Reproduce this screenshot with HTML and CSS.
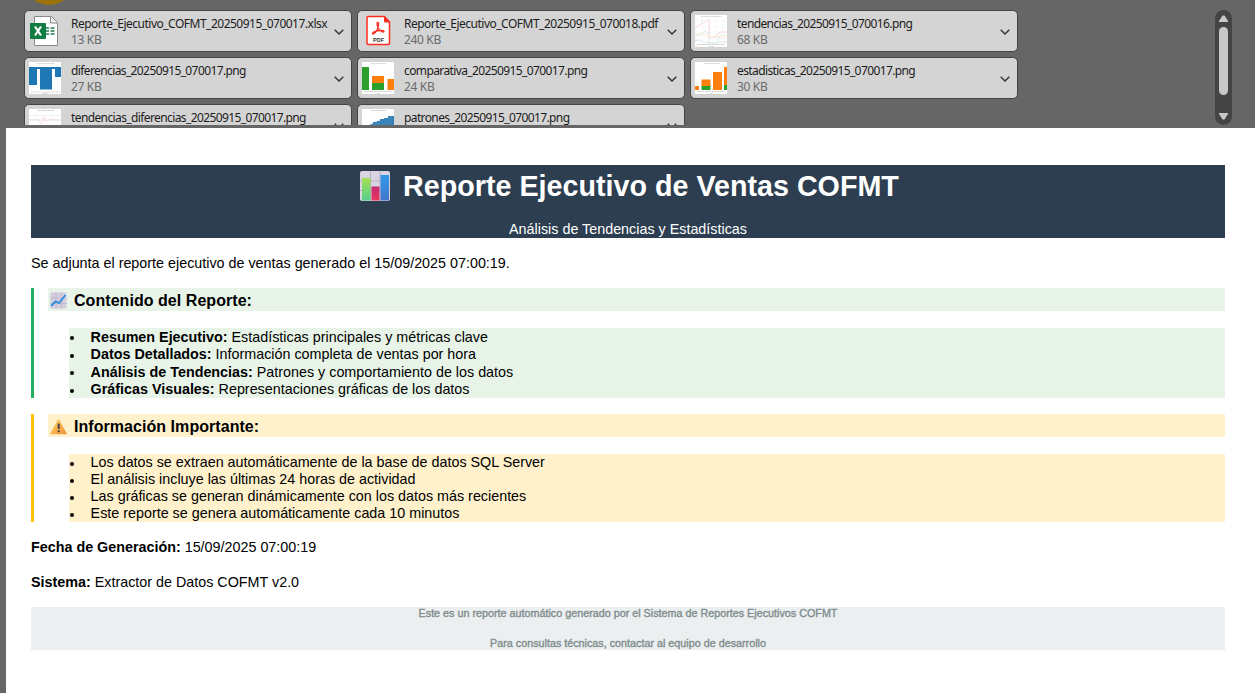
FILE: index.html
```html
<!DOCTYPE html>
<html lang="es">
<head>
<meta charset="utf-8">
<title>Reporte Ejecutivo de Ventas COFMT</title>
<link rel="stylesheet" href="styles.css">
</head>
<body>
<header class="attachments">
  <div class="avatar"></div>
  <div class="files">
    <div class="file">
      <svg class="thumb" viewBox="0 0 32 32"><path d="M5.500 1.500h17l6 6v23h-23z" fill="#fff" stroke="#8a8a8a"/><path d="M21.500 1.500v6.500h7" fill="#eee" stroke="#8a8a8a"/><path d="M17 13h3m1.500 0h4M17 16h3m1.500 0h4M17 19h3m1.500 0h4" stroke="#21804f" stroke-width="1.600"/><rect x="1" y="8" width="16" height="16" rx="1" fill="#107c41"/><path d="M6 11.500l6 9M12 11.500l-6 9" stroke="#fff" stroke-width="2.200"/></svg>
      <div class="info"><span class="name long">Reporte_Ejecutivo_COFMT_20250915_070017.xlsx</span><span class="size">13 KB</span></div>
      <svg class="chevron" viewBox="0 0 10 6"><path d="M.7 .7L5 5 9.300 .7"/></svg>
    </div>
    <div class="file">
      <svg class="thumb" viewBox="0 0 32 32"><path d="M6.500 1.500h16l5 5.500v21q0 1.500-1.500 1.500h-19.500q-1.500 0-1.500-1.500v-25q0-1.500 1.500-1.500z" fill="#fff" stroke="#fa2c20" stroke-width="1.500"/><path d="M22 1l6 6.500h-4.500q-1.500 0-1.500-1.500z" fill="#fa2c20"/><path d="M15.500 7.500c2-.5 1 5-1 8.500-1.500 2.500-4 4-4 2.500s4-2.500 7-3c3-.4 5 .3 4.500 1.200-1 1.300-4.500-1.200-6-4-1-2.500-1.500-5-.5-5.200z" fill="none" stroke="#fa2c20" stroke-width="1.300"/><text class="pdf-label" x="16.500" y="26.500">PDF</text></svg>
      <div class="info"><span class="name long">Reporte_Ejecutivo_COFMT_20250915_070018.pdf</span><span class="size">240 KB</span></div>
      <svg class="chevron" viewBox="0 0 10 6"><path d="M.7 .7L5 5 9.300 .7"/></svg>
    </div>
    <div class="file">
      <svg class="thumb" viewBox="0 0 32 32"><path d="M0 0h32v32H0z" fill="#fff"/><path d="M0 6h32M0 12h32M0 18h32M0 24h32M7 3v26M14 3v26M21 3v26M28 3v26" stroke="#f7f7f7"/><path d="M6 1.500h21M2 29.500h28M14 31.500h5" stroke="#d4d4d4" stroke-dasharray="2 .5"/><g fill="none"><path d="M0 13l4-3 4-2 6-4 .5 18h6l4-5h7.500" stroke="#fadada"/><path d="M0 21l5-1 5-4 4 3v9h9l2-8h7" stroke="#dff0df"/><path d="M0 20l7-1 7 3h18" stroke="#fcebda"/><path d="M0 26l5-1 5 3h13l3-1h6" stroke="#dcebf5"/></g></svg>
      <div class="info"><span class="name">tendencias_20250915_070016.png</span><span class="size">68 KB</span></div>
      <svg class="chevron" viewBox="0 0 10 6"><path d="M.7 .7L5 5 9.300 .7"/></svg>
    </div>
    <div class="file">
      <svg class="thumb" viewBox="0 0 32 32"><path d="M0 0h32v32H0z" fill="#fff"/><path d="M8 1.500h17M2 30h29M14 31.500h5" stroke="#d4d4d4" stroke-dasharray="2 .5"/><path d="M0 5h32v10h-6V7h-3v20.500H11V7H8v16H0z" fill="#1f77b4"/></svg>
      <div class="info"><span class="name">diferencias_20250915_070017.png</span><span class="size">27 KB</span></div>
      <svg class="chevron" viewBox="0 0 10 6"><path d="M.7 .7L5 5 9.300 .7"/></svg>
    </div>
    <div class="file">
      <svg class="thumb" viewBox="0 0 32 32"><path d="M0 0h32v32H0z" fill="#fff"/><path d="M9 1.500h15M2 29.500h28M15 31.500h3" stroke="#d4d4d4" stroke-dasharray="2 .5"/><path d="M0 5h7v23H0zM10 21h12v7H10z" fill="#2ca02c"/><path d="M10 14h12v7H10zM25.500 17H32v11h-6.500z" fill="#ff7f0e"/></svg>
      <div class="info"><span class="name">comparativa_20250915_070017.png</span><span class="size">24 KB</span></div>
      <svg class="chevron" viewBox="0 0 10 6"><path d="M.7 .7L5 5 9.300 .7"/></svg>
    </div>
    <div class="file">
      <svg class="thumb" viewBox="0 0 32 32"><path d="M0 0h32v32H0z" fill="#fff"/><path d="M9 1.500h16M2 29.500h28M15 31.500h3" stroke="#d4d4d4" stroke-dasharray="2 .5"/><path d="M0 24h4v4H0zM6.500 17.500h9V24h-9zM18 10h9v18h-9zM29 5h3v18h-3z" fill="#ff7f0e"/><path d="M6.500 24h9v4h-9zM29 23h3v5h-3z" fill="#2ca02c"/></svg>
      <div class="info"><span class="name">estadisticas_20250915_070017.png</span><span class="size">30 KB</span></div>
      <svg class="chevron" viewBox="0 0 10 6"><path d="M.7 .7L5 5 9.300 .7"/></svg>
    </div>
    <div class="file">
      <svg class="thumb" viewBox="0 0 32 32"><path d="M0 0h32v32H0z" fill="#fff"/><path d="M9 1.500h16" stroke="#ccc" stroke-dasharray="2 .5"/><path d="M0 6.500h32" stroke="#f1f1f1"/><path d="M0 10l5 1 3-1 4 5 3-7 2 4 5-2 4 1h6" fill="none" stroke="#f3ddd4"/><path d="M0 11h32" stroke="#efe6e6"/></svg>
      <div class="info"><span class="name">tendencias_diferencias_20250915_070017.png</span></div>
      <svg class="chevron" viewBox="0 0 10 6"><path d="M.7 .7L5 5 9.300 .7"/></svg>
    </div>
    <div class="file">
      <svg class="thumb" viewBox="0 0 32 32"><path d="M0 0h32v32H0z" fill="#fff"/><path d="M9 1.500h15" stroke="#ccc" stroke-dasharray="2 .5"/><path d="M7 32V17h1.500v-2H11v-2h4v-1h3v-2h4V9h4V7h6v25z" fill="#3580b5"/><path d="M11 14v8M14 12v10M17 11v11M20 10v12M23 9v13M26 8v14M29 7v15" stroke="#5b9bc8" stroke-width=".5"/></svg>
      <div class="info"><span class="name">patrones_20250915_070017.png</span></div>
      <svg class="chevron" viewBox="0 0 10 6"><path d="M.7 .7L5 5 9.300 .7"/></svg>
    </div>
  </div>
  <div class="scrollbar">
    <svg viewBox="0 0 9 7"><path d="M3.500 .5h2L9 6v1H0V6z"/></svg>
    <div class="scroll-thumb"></div>
    <svg viewBox="0 0 9 7"><path d="M3.500 6.500h2L9 1V0H0v1z"/></svg>
  </div>
</header>
<main class="mail">
  <section class="banner">
    <h1>
      <svg class="banner-icon" viewBox="0 0 30 30"><defs><linearGradient id="g" x2="0" y2="1"><stop stop-color="#a5e052"/><stop offset="1" stop-color="#55cf8b"/></linearGradient><linearGradient id="r" x2="0" y2="1"><stop stop-color="#c22a75"/><stop offset="1" stop-color="#ed365d"/></linearGradient><linearGradient id="b" x2="0" y2="1"><stop stop-color="#329bea"/><stop offset="1" stop-color="#4275cc"/></linearGradient></defs><rect width="30" height="30" rx="2" fill="#dad4e2"/><path d="M10.500 0v30M20 0v30M0 10h30M0 19.500h30" stroke="#b5afc0"/><path d="M2 7h8.500v22.500H2z" fill="url(#g)"/><path d="M11.500 15.500h8v14h-8z" fill="url(#r)"/><path d="M20.500 4H29v25.500h-8.500z" fill="url(#b)"/></svg>
      <span>Reporte Ejecutivo de Ventas COFMT</span>
    </h1>
    <p>Análisis de Tendencias y Estadísticas</p>
  </section>
  <p class="intro">Se adjunta el reporte ejecutivo de ventas generado el 15/09/2025 07:00:19.</p>
  <section class="panel green">
    <h2>
      <svg class="h-icon" viewBox="0 0 17 17"><rect x=".5" y=".5" width="16" height="16" rx="1" fill="#d4cddd"/><path d="M6 0v17M11.500 0v17M0 6h17M0 11.500h17" stroke="#c0b6cc" stroke-width=".8"/><path d="M1 14l4.500-4.500L9 11l6.500-8" fill="none" stroke="#328fdf" stroke-width="1.900"/></svg>
      <span>Contenido del Reporte:</span>
    </h2>
    <ul>
      <li><span><b>Resumen Ejecutivo:</b> Estadísticas principales y métricas clave</span></li>
      <li><span><b>Datos Detallados:</b> Información completa de ventas por hora</span></li>
      <li><span><b>Análisis de Tendencias:</b> Patrones y comportamiento de los datos</span></li>
      <li><span><b>Gráficas Visuales:</b> Representaciones gráficas de los datos</span></li>
    </ul>
  </section>
  <section class="panel yellow">
    <h2>
      <svg class="h-icon" viewBox="0 0 17 17"><defs><linearGradient id="w" x2="1" y2="1"><stop stop-color="#ffd45a"/><stop offset="1" stop-color="#f39442"/></linearGradient></defs><path d="M8.500 2L16 15.500H1z" fill="url(#w)" stroke="url(#w)" stroke-width="1.500" stroke-linejoin="round"/><path d="M8.700 5.500v5.500M8.700 12.300v2" stroke="#483f4c" stroke-width="2"/></svg>
      <span>Información Importante:</span>
    </h2>
    <ul>
      <li><span>Los datos se extraen automáticamente de la base de datos SQL Server</span></li>
      <li><span>El análisis incluye las últimas 24 horas de actividad</span></li>
      <li><span>Las gráficas se generan dinámicamente con los datos más recientes</span></li>
      <li><span>Este reporte se genera automáticamente cada 10 minutos</span></li>
    </ul>
  </section>
  <p class="meta"><b>Fecha de Generación:</b> 15/09/2025 07:00:19</p>
  <p class="meta"><b>Sistema:</b> Extractor de Datos COFMT v2.0</p>
  <footer>
    <p>Este es un reporte automático generado por el Sistema de Reportes Ejecutivos COFMT</p>
    <p>Para consultas técnicas, contactar al equipo de desarrollo</p>
  </footer>
</main>
</body>
</html>
```
FILE: styles.css
```css
* { box-sizing: border-box; }
body { margin: 0; width: 1255px; height: 693px; overflow: hidden; background: #666; font-family: "Liberation Sans", Arial, sans-serif; color: #000; }
h1, h2, p, ul { margin: 0; padding: 0; }
.attachments { position: relative; height: 128px; display: flex; align-items: flex-start; padding-left: 24px; }
.avatar { position: absolute; left: 24px; top: -45px; width: 50px; height: 50px; border-radius: 50%; background: #9c730c; }
.files { width: 1191px; height: 125px; padding-top: 10px; overflow: hidden; display: grid; grid-template-columns: repeat(3, 328px); grid-auto-rows: 42px; gap: 5px; }
.file { display: flex; align-items: center; height: 42px; padding: 0 7px 0 4px; border: 1px solid #444; border-radius: 5px; background: #d4d4d4; }
.thumb { width: 32px; height: 32px; flex: none; }
.info { flex: 1; min-width: 0; height: 32px; display: flex; flex-direction: column; margin: 2px 0 0 10px; white-space: nowrap; font-family: "Noto Sans", "Open Sans", sans-serif; font-size: 12px; line-height: 16px; }
.name { color: #1c1c1c; letter-spacing: -.61px; }
.name.long { letter-spacing: -.5px; }
.size { color: #6a6a6a; letter-spacing: -.35px; }
.chevron { width: 10px; height: 6px; margin-top: 2px; flex: none; }
.chevron path { fill: none; stroke: #333; stroke-width: 1.4; }
.pdf-label { font: bold 5.5px "Liberation Sans", Arial, sans-serif; text-anchor: middle; fill: #333; }
.scrollbar { width: 17px; height: 115px; margin-top: 10px; padding: 5px 4px; border-radius: 9px; background: #444; display: flex; flex-direction: column; }
.scrollbar svg { width: 9px; height: 7px; flex: none; fill: #c8c8c8; }
.scroll-thumb { height: 68px; margin: 5px 0 18px; border-radius: 5px; background: #c8c8c8; flex: none; }
.mail { margin-left: 6px; height: 565px; padding: 37px 30px 0 25px; background: #fff; font-size: 14.33px; line-height: 17px; }
.banner { height: 73px; background: #2c3e50; color: #fff; text-align: center; }
h1 { height: 42px; display: flex; align-items: center; justify-content: center; gap: 13px; padding-left: 3px; font-size: 28.7px; line-height: 42px; }
.banner-icon { width: 30px; height: 30px; }
.banner p { margin-top: 14px; }
.intro { margin-top: 17px; }
.panel { padding-left: 14px; border-left: 3px solid; }
.green { margin-top: 16px; height: 110px; border-color: #27ae60; }
.yellow { margin-top: 16px; height: 108px; border-color: #ffc107; }
h2 { height: 23px; display: flex; align-items: center; gap: 7px; padding: 2px 0 0 2px; font-size: 16px; line-height: 21px; letter-spacing: .05px; }
.h-icon { width: 17px; height: 17px; }
ul { margin: 17px 0 0 21px; list-style: none; }
li { display: flex; align-items: center; height: 17px; }
.green li { height: 17.5px; padding-top: .5px; }
li::before { content: ""; width: 4px; height: 4px; margin: 2px 16.6px 0 1px; border-radius: 50%; background: #000; }
.green h2, .green ul { background: #e8f4e8; }
.yellow h2, .yellow ul { background: #fff1cc; }
.meta { margin-top: 17px; }
.meta + .meta { margin-top: 18px; }
footer { height: 43px; margin-top: 16px; background: #ebeff0; color: #7f8c8d; text-align: center; font-size: 10.77px; -webkit-text-stroke: .35px #7f8c8d; }
footer p { height: 13px; line-height: 13px; }
footer p + p { margin-top: 17px; }
```
